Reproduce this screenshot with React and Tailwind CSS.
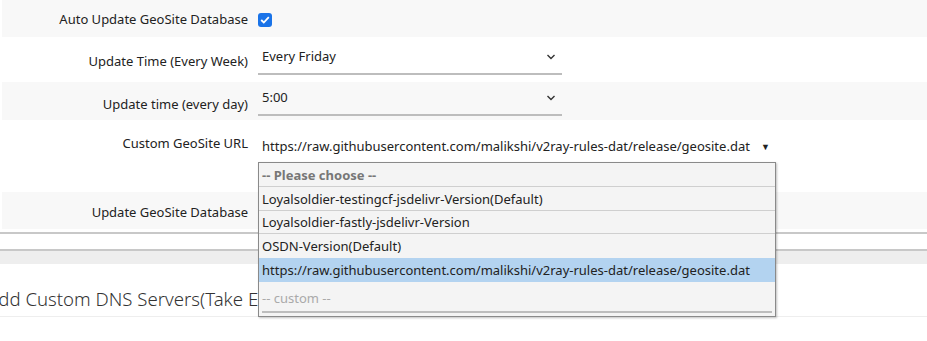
import React from "react";

const font = { fontFamily: '"Noto Sans", "Open Sans", sans-serif' };

function Chevron() {
  return (
    <svg width="10" height="6" viewBox="0 0 10 6" className="text-[#333]">
      <path d="M1.5 1 L5 4.5 L8.5 1" fill="none" stroke="currentColor" strokeWidth="1.4" />
    </svg>
  );
}

function SelectLine({ value, height, pt }) {
  return (
    <div className={`w-[304px] ${height} flex flex-col justify-between`}>
      <div className={`flex items-center justify-between pl-[4px] pr-[6px] ${pt}`}>
        <span>{value}</span>
        <Chevron />
      </div>
      <div className="h-[2px] bg-[#bdbdbd]" />
    </div>
  );
}

export default function App() {
  return (
    <div className="relative w-[927px] h-[341px] bg-white text-[13px] text-[#222] overflow-hidden" style={font}>
      <div className="pl-[2px]">
        {/* Row 1 */}
        <div className="flex h-[37px] bg-[#f8f8f8] items-center">
          <div className="w-[246px] text-right pt-[3px]">Auto Update GeoSite Database</div>
          <div className="pl-[10px] flex items-center pt-[3px]">
            <div className="w-[14px] h-[14px] rounded-[3px] bg-[#1a73e8] flex items-center justify-center">
              <svg width="10" height="8" viewBox="0 0 10 8">
                <path d="M1.2 4 L3.8 6.5 L8.8 1.2" fill="none" stroke="white" strokeWidth="1.8" />
              </svg>
            </div>
          </div>
        </div>
        {/* Row 2 */}
        <div className="flex h-[45px] bg-white">
          <div className="w-[246px] text-right pt-[15px]">Update Time (Every Week)</div>
          <div className="pl-[10px]">
            <SelectLine value="Every Friday" height="h-[38px]" pt="pt-[10px]" />
          </div>
        </div>
        {/* Row 3 */}
        <div className="flex h-[38px] bg-[#f8f8f8]">
          <div className="w-[246px] text-right pt-[13px]">Update time (every day)</div>
          <div className="pl-[10px]">
            <SelectLine value="5:00" height="h-[34px]" pt="pt-[6px]" />
          </div>
        </div>
        {/* Row 4 */}
        <div className="flex h-[72px] bg-white">
          <div className="w-[246px] text-right pt-[14px]">Custom GeoSite URL</div>
          <div className="pl-[14px] pt-[17px] flex items-start gap-[11px]">
            <span>https://raw.githubusercontent.com/malikshi/v2ray-rules-dat/release/geosite.dat</span>
            <span className="text-[9px] pt-[3px]">▼</span>
          </div>
        </div>
        {/* Row 5 */}
        <div className="flex h-[37px] bg-[#f8f8f8] items-center">
          <div className="w-[246px] text-right pt-[5px]">Update GeoSite Database</div>
        </div>
      </div>
      <div className="h-[3px]" />
      <div className="h-[2px] bg-[#c8c8c8]" />
      <div className="h-[15px] bg-white" />
      <div className="h-[2px] bg-[#c8c8c8]" />
      <div className="h-[13px] bg-[#eeeeee]" />
      <div className="h-[53px] border-b border-[#eeeeee] flex items-center">
        <span className="text-[18.6px] text-[#333] font-light -ml-[13px] pt-[17px] whitespace-nowrap">Add Custom DNS Servers(Take Effect After Restart)</span>
      </div>

      {/* Dropdown overlay */}
      <div className="absolute left-[258px] top-[162px] w-[518px] h-[155px] flex flex-col bg-[#f4f4f4] border border-[#8a8a8a] shadow-[1px_1px_2px_rgba(0,0,0,0.25)]">
        <div className="h-[24px] shrink-0 flex items-center pl-[3px] pt-[2px] font-bold text-[#777] border-b border-[#cfcfcf]">-- Please choose --</div>
        <div className="h-[24px] shrink-0 flex items-center pl-[3px] pt-[2px] border-b border-[#cfcfcf]">Loyalsoldier-testingcf-jsdelivr-Version(Default)</div>
        <div className="h-[23px] shrink-0 flex items-center pl-[3px] pt-[2px] border-b border-[#cfcfcf]">Loyalsoldier-fastly-jsdelivr-Version</div>
        <div className="h-[24px] shrink-0 flex items-center pl-[3px] pt-[2px]">OSDN-Version(Default)</div>
        <div className="h-[24px] shrink-0 flex items-center pl-[3px] pt-[1px] bg-[#b3d3f0]">https://raw.githubusercontent.com/malikshi/v2ray-rules-dat/release/geosite.dat</div>
        <div className="flex-1 flex items-end pb-[3px] pl-[3px] text-[#aaa]">-- custom --</div>
        <div className="mx-[3px] mb-[3px] h-[2px] bg-[#bdbdbd] shrink-0" />
      </div>
    </div>
  );
}
